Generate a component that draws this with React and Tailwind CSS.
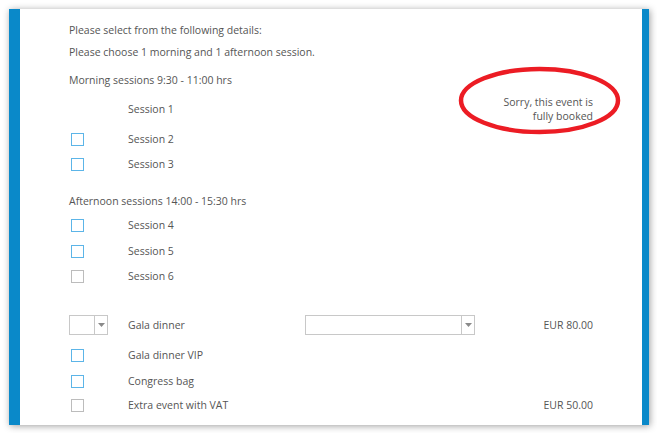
import React from "react";

const font = { fontFamily: '"Open Sans", "Liberation Sans", sans-serif' };

function Box({ gray }) {
  return (
    <svg width="13" height="13" viewBox="0 0 13 13" className="ml-[2px] block">
      <rect x="0.5" y="0.5" width="12" height="12" fill="#ffffff" stroke={gray ? "#bcbcbc" : "#5cb5e8"} strokeWidth="1" />
    </svg>
  );
}

function Arrow() {
  return (
    <svg width="7" height="4" viewBox="0 0 7 4" className="block">
      <path d="M0 0 L7 0 L3.5 4 Z" fill="#8a8a8a" />
    </svg>
  );
}

function Row({ className = "", check, label, extra, price }) {
  return (
    <div className={`grid h-[20px] grid-cols-[59px_177px_170px_1fr] grid-rows-[20px] items-center ${className}`}>
      <div className="flex items-center">{check}</div>
      <div>{label}</div>
      <div>{extra}</div>
      <div className="flex h-[20px] items-center justify-end text-right">{price}</div>
    </div>
  );
}

function Select({ width }) {
  return (
    <div className={`flex h-[20px] ${width} border border-[#c8c8c8] bg-white`}>
      <div className="flex-1" />
      <div className="flex w-[13px] items-center justify-center border-l border-[#c8c8c8]">
        <Arrow />
      </div>
    </div>
  );
}

export default function App() {
  return (
    <div className="relative h-[433px] w-[657px] overflow-hidden bg-white" style={font}>
      <div className="absolute left-[9px] top-[9px] h-[416px] w-[640px] border-l-[11px] border-r-[7px] border-[#0a89c9] bg-white shadow-[1px_1px_7px_rgba(0,0,0,0.38)]">
        <div className="flex flex-col pl-[49px] pr-[49px] pt-[11px] text-[10.5px] leading-[20px] text-[#555]">
          <div className="h-[20px] leading-[20px]">Please select from the following details:</div>
          <div className="mt-[2px] h-[20px] leading-[20px]">Please choose 1 morning and 1 afternoon session.</div>
          <div className="mt-[8px] h-[20px] leading-[20px]">Morning sessions 9:30 - 11:00 hrs</div>
          <Row
            className="mt-[9px]"
            label="Session 1"
            price={
              <div className="leading-[14px]">
                Sorry, this event is
                <br />
                fully booked
              </div>
            }
          />
          <Row className="mt-[10px]" check={<Box />} label="Session 2" />
          <Row className="mt-[5px]" check={<Box />} label="Session 3" />
          <div className="mt-[17px] h-[20px] leading-[20px]">Afternoon sessions 14:00 - 15:30 hrs</div>
          <Row className="mt-[4px]" check={<Box />} label="Session 4" />
          <Row className="mt-[6px]" check={<Box />} label="Session 5" />
          <Row className="mt-[5px]" check={<Box gray />} label="Session 6" />
          <Row
            className="mt-[29px]"
            check={<Select width="w-[39px]" />}
            label="Gala dinner"
            extra={<Select width="w-[170px]" />}
            price="EUR 80.00"
          />
          <Row className="mt-[10px]" check={<Box />} label="Gala dinner VIP" />
          <Row className="mt-[6px]" check={<Box />} label="Congress bag" />
          <Row className="mt-[4px]" check={<Box gray />} label="Extra event with VAT" price="EUR 50.00" />
        </div>
      </div>
      <svg className="pointer-events-none absolute left-0 top-0" width="657" height="433">
        <ellipse cx="539.5" cy="100.5" rx="78.5" ry="31.5" fill="none" stroke="#ec1c24" strokeWidth="4.5" />
      </svg>
    </div>
  );
}
